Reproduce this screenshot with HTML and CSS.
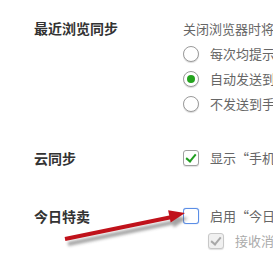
FILE: index.html
```html
<!DOCTYPE html>
<html lang="zh-CN">
<head>
  <meta charset="UTF-8">
  <title>设置</title>
  <link rel="stylesheet" href="styles.css">
</head>
<body>
  <div class="settings">
    <div class="row first">
      <div class="label">最近浏览同步</div>
      <div class="opts">
        <div class="desc">关闭浏览器时将</div>
        <div class="opt"><span class="radio"></span><span>每次均提示</span></div>
        <div class="opt"><span class="radio on"></span><span>自动发送到</span></div>
        <div class="opt"><span class="radio"></span><span>不发送到手</span></div>
      </div>
    </div>

    <div class="row cloud">
      <div class="label">云同步</div>
      <div class="opts">
        <div class="opt"><span class="check checked"></span><span>显示“手机</span></div>
      </div>
    </div>

    <div class="row deal">
      <div class="label">今日特卖</div>
      <div class="opts">
        <div class="opt"><span class="check focus"></span><span>启用“今日</span></div>
        <div class="opt sub disabled"><span class="check checked grey"></span><span>接收消</span></div>
      </div>
    </div>
  </div>

  <svg class="arrow" width="273" height="259" viewBox="0 0 273 259">
    <defs>
      <filter id="blur" x="-20%" y="-50%" width="140%" height="200%">
        <feGaussianBlur stdDeviation="1.8"/>
      </filter>
    </defs>
    <g fill="#666" stroke="#666" opacity="0.6" filter="url(#blur)" transform="translate(3,5)">
      <line x1="65" y1="239" x2="172" y2="217" stroke-width="4"/>
      <polygon points="185,213 170.7,222.5 168.1,210.3" stroke="none"/>
    </g>
    <g fill="#c0121b" stroke="#c0121b">
      <line x1="65" y1="239" x2="172" y2="217" stroke-width="4"/>
      <polygon points="185,213 170.7,222.5 168.1,210.3" stroke="none"/>
    </g>
  </svg>
</body>
</html>
```

FILE: styles.css
```css
body {
  margin: 0;
  background: #fff;
  font-family: "Noto Sans CJK SC", "Noto Sans", sans-serif;
  overflow: hidden;
}

.settings {
  padding: 16px 0 0 34px;
}

.row {
  display: grid;
  grid-template-columns: 149px 1fr;
}

.label {
  font-size: 14px;
  font-weight: bold;
  color: #333;
  line-height: 25px;
  white-space: nowrap;
}

.opts {
  font-size: 13px;
  color: #666;
  white-space: nowrap;
  overflow: hidden;
}

.desc {
  line-height: 25px;
}

.opt {
  display: flex;
  align-items: center;
  gap: 11px;
  height: 25px;
}

.row.cloud {
  margin-top: 29px;
}

.row.deal {
  margin-top: 32px;
}

.row.cloud .label,
.row.deal .label {
  line-height: 26px;
}

.opt.sub {
  margin-left: 25px;
}

.disabled {
  color: #aaa;
}

.radio {
  width: 14px;
  height: 14px;
  border: 1px solid #9a9a9a;
  border-radius: 50%;
  background: #fff;
  box-shadow: 0 1px 1px rgba(0, 0, 0, 0.15);
  position: relative;
  flex: none;
}

.radio.on::after {
  content: "";
  position: absolute;
  left: 3px;
  top: 3px;
  width: 8px;
  height: 8px;
  border-radius: 50%;
  background: #25a41f;
}

.check {
  width: 14px;
  height: 14px;
  border: 1px solid #a0a0a0;
  border-radius: 3px;
  background: #fff;
  box-shadow: 0 1px 1px rgba(0, 0, 0, 0.12);
  position: relative;
  flex: none;
}

.check.checked::after {
  content: "";
  position: absolute;
  left: 4px;
  top: 1px;
  width: 4px;
  height: 8px;
  border: solid #1f9e1f;
  border-width: 0 2px 2px 0;
  transform: rotate(40deg);
}

.check.focus {
  border-color: #5b8ee6;
  box-shadow: 0 0 1px #5b8ee6;
}

.check.grey {
  background: #f0f0f0;
  border-color: #c8c8c8;
}

.check.grey::after {
  border-color: #a8a8a8;
}

.arrow {
  position: absolute;
  left: 0;
  top: 0;
  pointer-events: none;
}
```
